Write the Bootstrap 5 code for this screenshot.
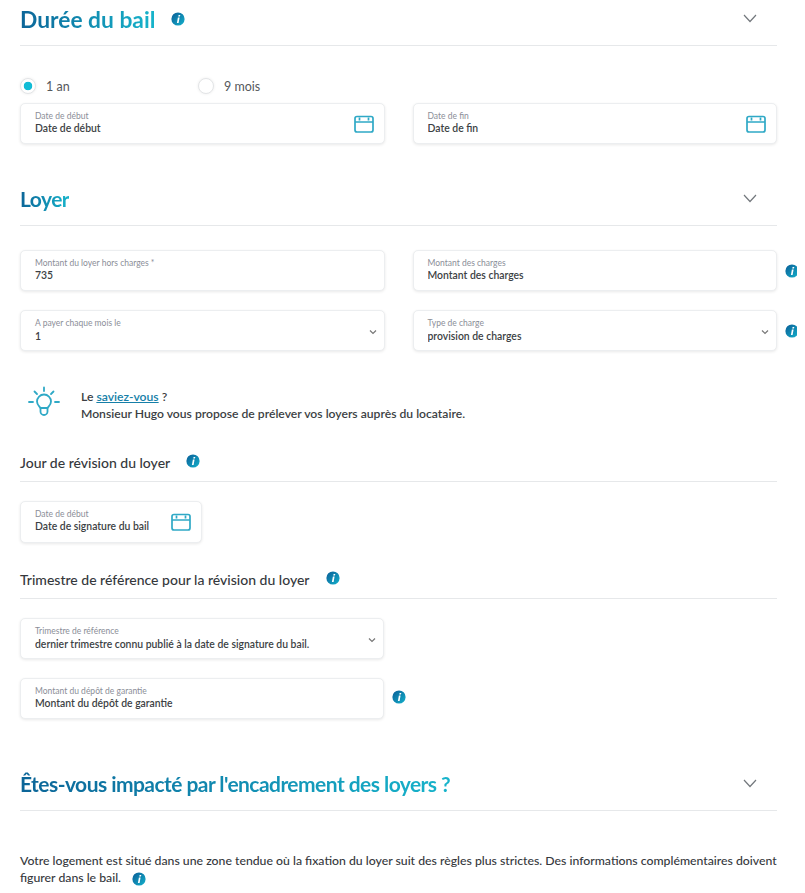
<!DOCTYPE html>
<html lang="fr">
<head>
  <meta charset="UTF-8" />
  <meta name="viewport" content="width=device-width, initial-scale=1.0" />
  <title>Bail - Loyer</title>
  <link href="https://cdn.jsdelivr.net/npm/bootstrap@5.3.2/dist/css/bootstrap.min.css" rel="stylesheet" />
  <style>
    body {
      font-family: Lato, "Noto Sans", sans-serif;
      color: #3c3f44;
      background: #fff;
    }

    .page-bail {
      width: 797px;
      padding: 0 20px;
      overflow: hidden;
    }

    /* titres de section */
    .titre-section {
      height: 46px;
      border-bottom: 1px solid #e6e8ea;
      padding-top: 5px;
    }

    .titre-section h2 {
      font-size: 21px;
      line-height: 28px;
      font-weight: 700;
      letter-spacing: -.55px;
      margin: 0;
      background: linear-gradient(90deg, #0c6598, #17b4cb);
      -webkit-background-clip: text;
      background-clip: text;
      color: transparent;
    }

    .titre-section h2.titre-large {
      font-size: 22.8px;
      letter-spacing: 0;
    }

    .titre-section .chevron {
      margin-right: 20px;
      margin-top: 9px;
    }

    .bloc-loyer { margin-top: 39px; height: 43px; padding-top: 2px; }
    .bloc-encadrement { margin-top: 46px; }

    .sous-titre {
      height: 29px;
      border-bottom: 1px solid #e6e8ea;
      margin-top: 27px;
    }

    .sous-titre h3 {
      font-size: 14px;
      line-height: 20px;
      font-weight: 500;
      color: #35383c;
      margin: 0;
    }

    .sous-titre svg { margin-top: 1px; }

    .revision-titre { margin-top: 31px; }

    /* choix de durée */
    .choix-duree {
      margin-top: 31px;
      height: 18px;
      font-size: 12.5px;
      color: #55585c;
    }

    .choix-duree .form-check {
      width: 178px;
      min-height: 0;
      padding: 0;
      margin: 0;
      gap: 10px;
    }

    .choix-duree .form-check-input {
      width: 16px;
      height: 16px;
      margin: 0;
      float: none;
      border: 1px solid #e3e5e7;
      box-shadow: 0 0 3px rgba(0, 0, 0, .08);
    }

    .choix-duree .form-check-input:checked {
      background-color: #fff;
      background-image: radial-gradient(circle, #12bcd6 0 4px, transparent 4.6px);
    }

    .choix-duree .form-check-label { line-height: 18px; margin-top: 2px; }

    /* champs */
    .champ {
      height: 41px;
      background: #fff;
      border: 1px solid #eceef0;
      border-radius: 5px;
      box-shadow: 0 1px 3px rgba(0, 0, 0, .09);
      padding: 7px 10px 0 14px;
      min-width: 0;
    }

    .champ label {
      display: block;
      font-size: 8.5px;
      line-height: 11px;
      margin-bottom: -1px;
      color: #8b8e98;
      white-space: nowrap;
    }

    .champ .form-control,
    .champ .form-select {
      font-size: 10.4px;
      line-height: 15px;
      font-weight: 600;
      color: #3c3f44;
      border: 0;
      border-radius: 0;
      box-shadow: none;
      padding: 0;
      background-color: transparent;
      min-height: 0;
      height: 15px;
    }

    .champ .form-control::placeholder { color: #3c3f44; opacity: 1; }

    .champ-date > div { margin-top: -1px; }

    .champ-select { padding-right: 7px; }

    .champ .form-select {
      margin-top: 1px;
      padding-right: 12px;
      background-image: url("data:image/svg+xml,%3csvg xmlns='http://www.w3.org/2000/svg' viewBox='0 0 8 6'%3e%3cpath fill='none' stroke='%23777' stroke-width='1.2' d='M1 1.500l3 3 3-3'/%3e%3c/svg%3e");
      background-position: right 0 top 0;
      background-size: 8px 6px;
    }

    .ligne-champs {
      --bs-gutter-x: 28px;
      --bs-gutter-y: 19px;
    }

    .info-bord {
      flex-shrink: 0;
      margin-left: 8px;
      margin-right: -22px;
    }

    .champ-court { width: 182px; height: 42px; margin-top: 19px; }

    .champ-moitie { width: 364px; }

    .espace-champ { margin-top: 19px; }

    /* astuce */
    .astuce {
      margin-top: 38px;
      font-size: 12.15px;
      line-height: 16.5px;
      font-weight: 600;
      color: #3c3f44;
    }

    .astuce a { color: #167fa8; }

    .astuce svg { margin: -8px 21px 0 8px; }

    .texte-bas {
      margin: 41px 0 0;
      font-size: 12.25px;
      line-height: 17px;
      font-weight: 500;
      color: #35383c;
    }
  </style>
</head>
<body>

  <svg width="0" height="0" class="position-absolute">
    <defs>
      <linearGradient id="degrade-info" x1="0" y1="0" x2="1" y2="1">
        <stop offset="0" stop-color="#0a5c96" />
        <stop offset="1" stop-color="#14b2cc" />
      </linearGradient>
      <symbol id="ico-info" viewBox="0 0 14 14">
        <circle cx="7" cy="7" r="6.6" fill="url(#degrade-info)" />
        <path fill="#fff" d="M7.600 2.900h1.700l-.35 1.500H7.250zM6.900 5.400h1.700L7.600 10.900H5.900z" />
      </symbol>
      <symbol id="ico-cal" viewBox="0 0 20 18">
        <rect x="1" y="1.500" width="18" height="15.500" rx="2" fill="none" stroke="#2fa9c6" stroke-width="1.700" />
        <path fill="none" stroke="#2fa9c6" stroke-width="1.700" d="M1 7h18M5.500 2.500v3M14.500 2.500v3" />
      </symbol>
      <symbol id="ico-chevron" viewBox="0 0 14 9">
        <path fill="none" stroke="#73787d" stroke-width="1.200" d="M1 1l6 6.500L13 1" />
      </symbol>
    </defs>
  </svg>

  <main class="page-bail">

    <!-- Durée du bail -->
    <div class="titre-section d-flex align-items-start justify-content-between">
      <div class="d-flex align-items-center gap-3">
        <h2 class="titre-large">Durée du bail</h2>
        <svg width="14" height="14"><use href="#ico-info" /></svg>
      </div>
      <svg class="chevron" width="14" height="9"><use href="#ico-chevron" /></svg>
    </div>

    <div class="choix-duree d-flex align-items-center">
      <div class="form-check d-flex align-items-center">
        <input class="form-check-input" type="radio" name="duree" id="duree1" checked />
        <label class="form-check-label" for="duree1">1 an</label>
      </div>
      <div class="form-check d-flex align-items-center">
        <input class="form-check-input" type="radio" name="duree" id="duree2" />
        <label class="form-check-label" for="duree2">9 mois</label>
      </div>
    </div>

    <div class="pt-2">
      <div class="row ligne-champs">
        <div class="col-6">
          <div class="champ champ-date d-flex align-items-center justify-content-between pt-0">
            <div class="flex-grow-1">
              <label for="dateDebut">Date de début</label>
              <input class="form-control" id="dateDebut" placeholder="Date de début" />
            </div>
            <svg width="20" height="18"><use href="#ico-cal" /></svg>
          </div>
        </div>
        <div class="col-6">
          <div class="champ champ-date d-flex align-items-center justify-content-between pt-0">
            <div class="flex-grow-1">
              <label for="dateFin">Date de fin</label>
              <input class="form-control" id="dateFin" placeholder="Date de fin" />
            </div>
            <svg width="20" height="18"><use href="#ico-cal" /></svg>
          </div>
        </div>
      </div>
    </div>

    <!-- Loyer -->
    <div class="titre-section bloc-loyer d-flex align-items-start justify-content-between">
      <h2>Loyer</h2>
      <svg class="chevron" width="14" height="9"><use href="#ico-chevron" /></svg>
    </div>

    <div class="pt-4">
      <div class="row ligne-champs">
        <div class="col-6">
          <div class="champ">
            <label for="montantLoyer">Montant du loyer hors charges *</label>
            <input class="form-control" id="montantLoyer" value="735" />
          </div>
        </div>
        <div class="col-6 d-flex align-items-center">
          <div class="champ flex-grow-1">
            <label for="montantCharges">Montant des charges</label>
            <input class="form-control" id="montantCharges" placeholder="Montant des charges" />
          </div>
          <svg class="info-bord" width="14" height="14"><use href="#ico-info" /></svg>
        </div>
        <div class="col-6">
          <div class="champ champ-select">
            <label for="jourPaiement">A payer chaque mois le</label>
            <select class="form-select" id="jourPaiement"><option>1</option></select>
          </div>
        </div>
        <div class="col-6 d-flex align-items-center">
          <div class="champ champ-select flex-grow-1">
            <label for="typeCharge">Type de charge</label>
            <select class="form-select" id="typeCharge"><option>provision de charges</option></select>
          </div>
          <svg class="info-bord" width="14" height="14"><use href="#ico-info" /></svg>
        </div>
      </div>
    </div>

    <!-- Astuce -->
    <div class="astuce d-flex align-items-center">
      <svg width="32" height="32" viewBox="0 0 32 32" fill="none" stroke="#2fa9c6" stroke-width="1.800" stroke-linecap="round">
        <path d="M16 1.500v3.500M6.500 5.500L9 8M25.500 5.500L23 8M1 16h4M27 16h4" />
        <path d="M12.500 22c-1.500-2-3.500-3.200-3.500-6.500a7 7 0 0 1 14 0c0 3.300-2 4.500-3.500 6.500z" />
        <path d="M12.500 22v3.500a3.500 3.500 0 0 0 7 0V22" />
      </svg>
      <div>
        Le <a href="#">saviez-vous</a> ?<br />
        Monsieur Hugo vous propose de prélever vos loyers auprès du locataire.
      </div>
    </div>

    <!-- Jour de révision -->
    <div class="sous-titre revision-titre d-flex align-items-start gap-3">
      <h3>Jour de révision du loyer</h3>
      <svg width="14" height="14"><use href="#ico-info" /></svg>
    </div>

    <div class="champ champ-court champ-date d-flex align-items-center justify-content-between pt-0">
      <div>
        <label for="dateRevision">Date de début</label>
        <input class="form-control" id="dateRevision" placeholder="Date de signature du bail" />
      </div>
      <svg class="flex-shrink-0" width="20" height="18"><use href="#ico-cal" /></svg>
    </div>

    <!-- Trimestre -->
    <div class="sous-titre d-flex align-items-start gap-3">
      <h3>Trimestre de référence pour la révision du loyer</h3>
      <svg width="14" height="14"><use href="#ico-info" /></svg>
    </div>

    <div class="champ champ-moitie champ-select espace-champ">
      <label for="trimestre">Trimestre de référence</label>
      <select class="form-select" id="trimestre"><option>dernier trimestre connu publié à la date de signature du bail.</option></select>
    </div>

    <div class="d-flex align-items-center espace-champ">
      <div class="champ champ-moitie">
        <label for="depot">Montant du dépôt de garantie</label>
        <input class="form-control" id="depot" placeholder="Montant du dépôt de garantie" />
      </div>
      <svg class="ms-2 mb-1" width="14" height="14"><use href="#ico-info" /></svg>
    </div>

    <!-- Encadrement -->
    <div class="titre-section bloc-encadrement d-flex align-items-start justify-content-between">
      <h2>Êtes-vous impacté par l'encadrement des loyers ?</h2>
      <svg class="chevron" width="14" height="9"><use href="#ico-chevron" /></svg>
    </div>

    <p class="texte-bas">
      Votre logement est situé dans une zone tendue où la fixation du loyer suit des règles plus strictes. Des informations complémentaires doivent figurer dans le bail.
      <svg class="ms-2" width="14" height="14"><use href="#ico-info" /></svg>
    </p>
  </main>

  <script src="https://cdn.jsdelivr.net/npm/bootstrap@5.3.2/dist/js/bootstrap.bundle.min.js"></script>
</body>
</html>
